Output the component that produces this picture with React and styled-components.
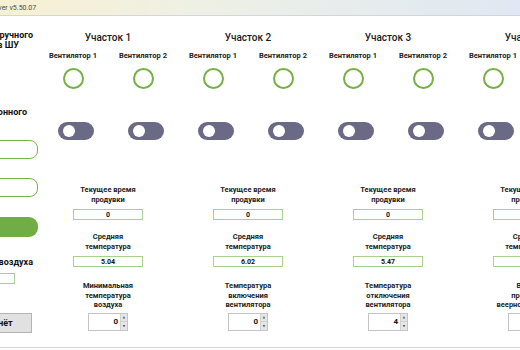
import styled, { createGlobalStyle } from 'styled-components';

const GlobalStyle = createGlobalStyle`
  html, body {
    margin: 0;
    padding: 0;
    background: #ffffff;
  }
  body {
    width: 520px;
    height: 350px;
    overflow: hidden;
    font-family: Roboto, "Noto Sans", "DejaVu Sans", sans-serif;
    color: #1e1e1e;
  }
`;

const sections = [
  {
    title: 'Участок 1',
    time: '0',
    avg: '5.04',
    setting: ['Минимальная', 'температура', 'воздуха'],
    value: 0,
  },
  {
    title: 'Участок 2',
    time: '0',
    avg: '6.02',
    setting: ['Температура', 'включения', 'вентилятора'],
    value: 0,
  },
  {
    title: 'Участок 3',
    time: '0',
    avg: '5.47',
    setting: ['Температура', 'отключения', 'вентилятора'],
    value: 4,
  },
  {
    title: 'Участок 4',
    time: '0',
    avg: '5.12',
    setting: ['Время', 'продувки', 'веерного режима'],
    value: 0,
  },
];

const App = () => {
  return (
    <>
      <GlobalStyle />
      <Window>
        <TitleBar>
          <TitleText>Server v5.50.07</TitleText>
        </TitleBar>
        <Body>
          <LeftPanel>
            <PanelLabel $pad={5}>Разрешение ручного</PanelLabel>
            <PanelLabel $pad={19}>управления из ШУ</PanelLabel>
            <PanelLabel $top={57} $pad={11}>
              Режим вентиляционного
            </PanelLabel>
            <RoundInput $top={23} />
            <RoundInput $top={19} />
            <GreenButton />
            <PanelLabel $top={20} $pad={5}>
              Температура воздуха
            </PanelLabel>
            <SmallField />
            <ReportButton>Отчёт</ReportButton>
          </LeftPanel>

          {sections.map((s) => (
            <Section key={s.title}>
              <SectionTitle>{s.title}</SectionTitle>
              <FanGrid>
                {[1, 2].map((n) => (
                  <FanColumn key={n}>
                    <FanLabel>Вентилятор {n}</FanLabel>
                    <Indicator />
                    <Toggle>
                      <Knob />
                    </Toggle>
                  </FanColumn>
                ))}
              </FanGrid>

              <InfoBlock $top={45}>
                <InfoLabel>
                  Текущее время
                  <br />
                  продувки
                </InfoLabel>
                <ValueBox>{s.time}</ValueBox>
              </InfoBlock>

              <InfoBlock $top={12}>
                <InfoLabel>
                  Средняя
                  <br />
                  температура
                </InfoLabel>
                <ValueBox>{s.avg}</ValueBox>
              </InfoBlock>

              <InfoBlock $top={14} $gap={3}>
                <InfoLabel>
                  {s.setting.map((line, i) => (
                    <span key={i}>
                      {line}
                      {i < s.setting.length - 1 && <br />}
                    </span>
                  ))}
                </InfoLabel>
                <Spinner>
                  <SpinValue>{s.value}</SpinValue>
                  <SpinButtons>
                    <SpinArrow>▲</SpinArrow>
                    <SpinArrow>▼</SpinArrow>
                  </SpinButtons>
                </Spinner>
              </InfoBlock>
            </Section>
          ))}
        </Body>
        <FooterLine />
      </Window>
    </>
  );
};

const Window = styled.div`
  width: 520px;
  height: 350px;
  display: flex;
  flex-direction: column;
  overflow: hidden;
`;

const TitleBar = styled.div`
  height: 15px;
  flex-shrink: 0;
  display: flex;
  align-items: center;
  background: linear-gradient(90deg, #f8f0d2 0%, #eef0e6 40%, #dfe8f3 100%);
  border-bottom: 1px solid #d2d6dc;
  overflow: hidden;
`;

const TitleText = styled.span`
  margin-left: -12px;
  font-size: 7px;
  color: #4a4a4a;
  white-space: nowrap;
`;

const Body = styled.div`
  height: 331px;
  display: flex;
  flex-direction: row;
  flex-shrink: 0;
`;

const LeftPanel = styled.div`
  width: 160px;
  margin-left: -122px;
  flex-shrink: 0;
  display: flex;
  flex-direction: column;
  align-items: flex-end;
  padding-top: 14px;
  box-sizing: border-box;
`;

const PanelLabel = styled.div`
  margin-top: ${(p) => p.$top || 0}px;
  width: 100%;
  font-size: 9px;
  line-height: 10px;
  font-weight: 700;
  white-space: nowrap;
  text-align: right;
  padding-right: ${(p) => p.$pad}px;
  box-sizing: border-box;
  color: #111;
`;

const RoundInput = styled.div`
  margin-top: ${(p) => p.$top}px;
  width: 100%;
  height: 19px;
  border: 1.5px solid #78b548;
  border-radius: 8px;
  background: #ffffff;
  box-sizing: border-box;
`;

const GreenButton = styled.div`
  margin-top: 20px;
  width: 100%;
  height: 20px;
  border-radius: 9px;
  background: #70ad47;
`;

const SmallField = styled.div`
  margin-top: 6px;
  margin-right: 23px;
  width: 42px;
  height: 11px;
  border: 1px solid #a8d08d;
  box-sizing: border-box;
`;

const ReportButton = styled.div`
  margin-top: 29px;
  margin-right: 6px;
  width: 64px;
  height: 20px;
  display: flex;
  align-items: center;
  justify-content: center;
  background: #e1e1e1;
  border: 1px solid #b4b4b4;
  box-sizing: border-box;
  font-size: 9px;
  font-weight: 700;
  color: #111;
`;

const Section = styled.div`
  width: 140px;
  flex-shrink: 0;
  display: flex;
  flex-direction: column;
  align-items: center;
  padding-top: 16px;
  box-sizing: border-box;
`;

const SectionTitle = styled.div`
  font-size: 10px;
  line-height: 12px;
  font-weight: 500;
  color: #1a1a1a;
`;

const FanGrid = styled.div`
  margin-top: 7px;
  display: grid;
  grid-template-columns: 68px 68px;
  gap: 2px;
`;

const FanColumn = styled.div`
  display: flex;
  flex-direction: column;
  align-items: center;
`;

const FanLabel = styled.div`
  font-size: 7.5px;
  line-height: 9px;
  font-weight: 700;
  white-space: nowrap;
  color: #222;
`;

const Indicator = styled.div`
  margin-top: 8px;
  width: 21px;
  height: 21px;
  border-radius: 50%;
  border: 2.5px solid #74b046;
  box-sizing: border-box;
`;

const Toggle = styled.div`
  margin-top: 33px;
  margin-left: 5px;
  width: 36px;
  height: 18px;
  border-radius: 9px;
  background: #6b6a86;
  display: flex;
  align-items: center;
  padding-left: 5px;
  box-sizing: border-box;
`;

const Knob = styled.div`
  width: 12px;
  height: 12px;
  border-radius: 50%;
  background: #ffffff;
`;

const InfoBlock = styled.div`
  margin-top: ${(p) => p.$top}px;
  display: flex;
  flex-direction: column;
  align-items: center;
  gap: ${(p) => p.$gap ?? 5}px;
`;

const InfoLabel = styled.div`
  font-size: 7.5px;
  line-height: 9.5px;
  font-weight: 700;
  text-align: center;
  white-space: nowrap;
  color: #222;
`;

const ValueBox = styled.div`
  width: 70px;
  height: 11px;
  border: 1.5px solid #a9d18e;
  box-sizing: border-box;
  display: flex;
  align-items: center;
  justify-content: center;
  font-size: 7px;
  font-weight: 700;
  color: #111;
`;

const Spinner = styled.div`
  width: 40px;
  height: 18px;
  border: 1px solid #c4c4c4;
  box-sizing: border-box;
  display: flex;
  flex-direction: row;
  background: #ffffff;
`;

const SpinValue = styled.div`
  flex: 1;
  display: flex;
  align-items: center;
  justify-content: flex-end;
  padding-right: 2px;
  font-size: 8px;
  font-weight: 700;
  color: #111;
`;

const SpinButtons = styled.div`
  width: 6px;
  display: flex;
  flex-direction: column;
  border-left: 1px solid #d0d0d0;
`;

const SpinArrow = styled.div`
  flex: 1;
  background: #e6e6e6;
  display: flex;
  align-items: center;
  justify-content: center;
  font-size: 3px;
  color: #555;
  & + & {
    border-top: 1px solid #d0d0d0;
  }
`;

const FooterLine = styled.div`
  height: 1px;
  background: #d6d6d6;
  flex-shrink: 0;
`;

export default App;
